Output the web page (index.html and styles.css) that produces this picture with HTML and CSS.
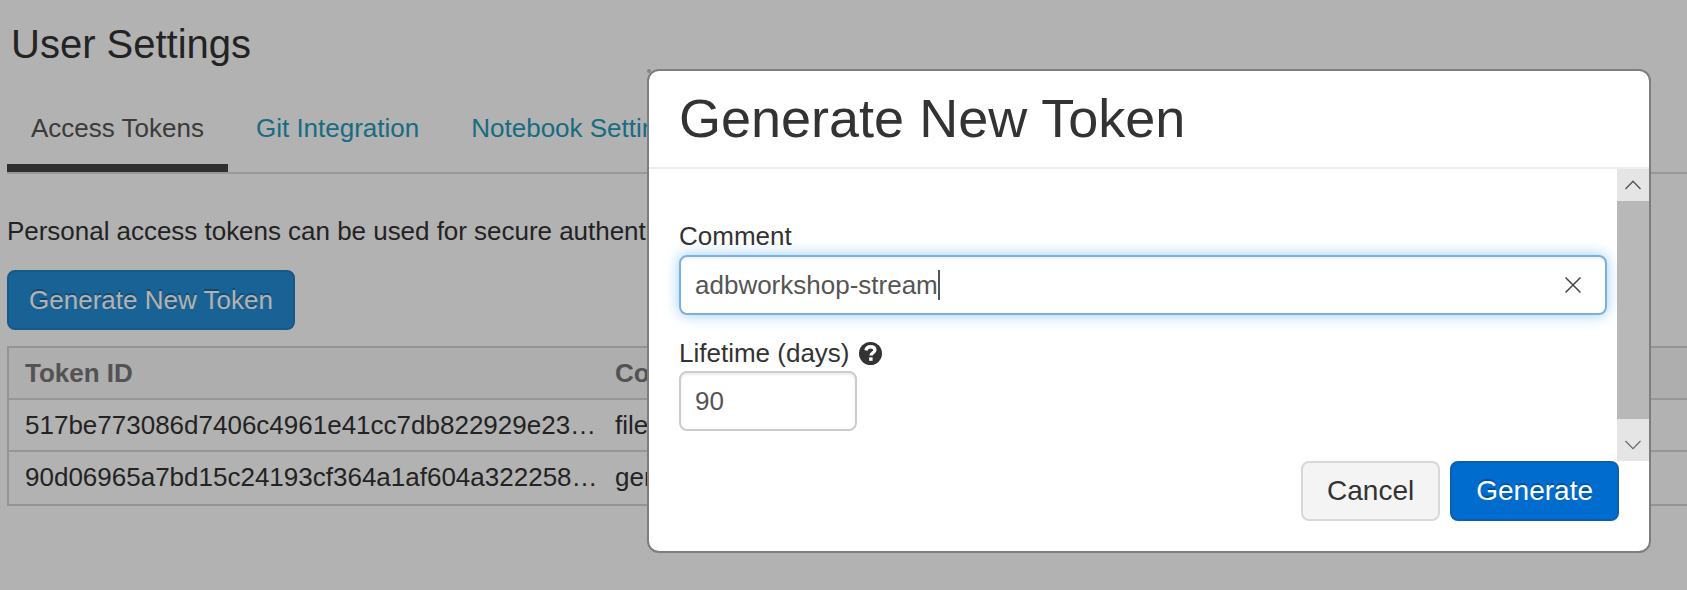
FILE: index.html
```html
<!DOCTYPE html>
<html lang="en">
<head>
<meta charset="utf-8">
<title>User Settings</title>
<link rel="stylesheet" href="styles.css">
</head>
<body>
<main class="page">
  <h1 class="page-title">User Settings</h1>
  <nav class="tabs">
    <a class="tab tab-active">Access Tokens</a>
    <a class="tab">Git Integration</a>
    <a class="tab">Notebook Settin</a>
  </nav>
  <p class="intro">Personal access tokens can be used for secure authenti</p>
  <button class="btn-new">Generate New Token</button>
  <div class="table">
    <div class="row row-head"><span>Token ID</span><span>Co</span></div>
    <div class="row"><span>517be773086d7406c4961e41cc7db822929e23…</span><span>file</span></div>
    <div class="row"><span>90d06965a7bd15c24193cf364a1af604a322258…</span><span>gen</span></div>
  </div>
</main>
<div class="backdrop">
  <i class="corner-dot"></i>
  <section class="modal">
    <header class="modal-head"><h2 class="modal-title">Generate New Token</h2></header>
    <div class="modal-body">
      <div class="form">
        <div class="label">Comment</div>
        <div class="input input-focus">
          <span class="value">adbworkshop-stream</span><i class="caret"></i>
          <svg class="clear" width="16" height="16" viewBox="0 0 16 16"><path d="M.5.5l15 15M15.5.5l-15 15" fill="none" stroke="#444" stroke-width="1.5"/></svg>
        </div>
        <div class="label label-life">Lifetime (days)
          <svg class="help" width="23" height="23" viewBox="0 0 22 22"><circle cx="11" cy="11" r="11" fill="#333"/><path d="M6.600 8C7.200 5.400 8.900 4.500 11.100 4.500c2.500 0 4.100 1.300 4.100 3.200 0 2.800-3.700 2.700-3.700 5.300" fill="none" stroke="#fff" stroke-width="3.200"/><path d="M9.700 14.700H13v3.300H9.700z" fill="#fff"/></svg>
        </div>
        <div class="input input-short"><span class="value">90</span></div>
      </div>
      <div class="scrollbar">
        <div class="scroll-up"><svg width="16" height="10" viewBox="0 0 16 10"><path d="M.5 9L8 1.300 15.500 9" fill="none" stroke="#555" stroke-width="1.400"/></svg></div>
        <div class="thumb"></div>
        <div class="scroll-down"><svg width="16" height="10" viewBox="0 0 16 10"><path d="M.5 1L8 8.700 15.500 1" fill="none" stroke="#666" stroke-width="1.100"/></svg></div>
      </div>
    </div>
    <footer class="modal-foot">
      <button class="btn btn-cancel">Cancel</button>
      <button class="btn btn-generate">Generate</button>
    </footer>
  </section>
</div>
</body>
</html>
```
FILE: styles.css
```css
* { box-sizing: border-box; }
body {
  margin: 0;
  height: 590px;
  overflow: hidden;
  background: #fff;
  color: #333;
  font: 26px/40px "Liberation Sans", Arial, sans-serif;
}
.page { padding: 24px 0 0 7px; }
.page-title { margin: 0 0 0 4px; font-size: 40px; line-height: 40px; font-weight: 400; }
.tabs {
  display: flex;
  gap: 4px;
  height: 70px;
  margin-top: 40px;
  border-bottom: 2px solid #dadada;
}
.tab { padding: 4px 24px 0; color: #259bb9; white-space: nowrap; }
.tab-active { color: #555; border-bottom: 8px solid #444; }
.intro { margin: 37px 0 19px; white-space: nowrap; letter-spacing: -.03px; }
.btn-new {
  display: block;
  width: 288px;
  height: 60px;
  padding: 0;
  border: 2px solid #2280bd;
  border-radius: 8px;
  background: #258dd6;
  color: #fff;
  font: inherit;
  text-shadow: 0 -2px 0 rgba(0, 0, 0, .25);
}
.table { margin-top: 16px; border: 2px solid #d4d4d4; border-right: 0; height: 160px; }
.row {
  display: grid;
  grid-template-columns: 590px 1fr;
  height: 52px;
  padding-left: 16px;
  line-height: 51px;
  border-bottom: 2px solid #d7d7d7;
}
.row:last-child { border-bottom: 0; }
.row-head { background: #f9f9f9; color: #777; font-weight: 700; }
.backdrop {
  position: absolute;
  inset: 0;
  padding: 69px 0 0 647px;
  background: rgba(0, 0, 0, .3);
}
.corner-dot {
  position: absolute;
  left: 647px;
  top: 69px;
  width: 4px;
  height: 4px;
  border-radius: 2px;
  background: #858585;
}
.modal {
  width: 1004px;
  height: 484px;
  border: 2px solid #7e7e7e;
  border-radius: 12px;
  background: #fff;
}
.modal-head { height: 98px; padding: 18px 30px; border-bottom: 2px solid #eee; }
.modal-title { margin: 0; font-size: 54px; line-height: 58px; font-weight: 400; }
.modal-body { display: flex; height: 292px; }
.form { flex: 1; padding: 50px 10px 0 30px; }
.label { height: 36px; line-height: 35px; }
.label-life { display: flex; align-items: center; gap: 9px; margin-top: 20px; }
.input {
  display: flex;
  align-items: center;
  height: 60px;
  padding: 0 24px 0 14px;
  border: 2px solid #ccc;
  border-radius: 8px;
  color: #555;
  box-shadow: inset 0 2px 2px rgba(0, 0, 0, .075);
}
.input-focus {
  border-color: #7ab0de;
  box-shadow: inset 0 2px 2px rgba(0, 0, 0, .06), 0 0 14px rgba(82, 168, 236, .6);
}
.input-short { width: 178px; }
.caret { width: 2px; height: 30px; background: #555; }
.clear { margin-left: auto; }
.scrollbar { display: flex; flex-direction: column; width: 32px; background: #e5e5e5; }
.scroll-up { display: flex; align-items: center; justify-content: center; height: 32px; }
.thumb { height: 218px; background: #b8b8b8; }
.scroll-down { display: flex; justify-content: center; padding-top: 21px; }
.modal-foot { display: flex; justify-content: flex-end; gap: 10px; padding-right: 30px; }
.btn {
  height: 60px;
  padding: 0 24px;
  border: 2px solid #d8d8d8;
  border-radius: 8px;
  background: #f4f4f4;
  color: #333;
  font: 28px/56px "Liberation Sans", Arial, sans-serif;
}
.btn-generate {
  border-color: #0960ad;
  background: #006dce;
  color: #fff;
  text-shadow: 0 -2px 0 rgba(0, 0, 0, .25);
}
```
